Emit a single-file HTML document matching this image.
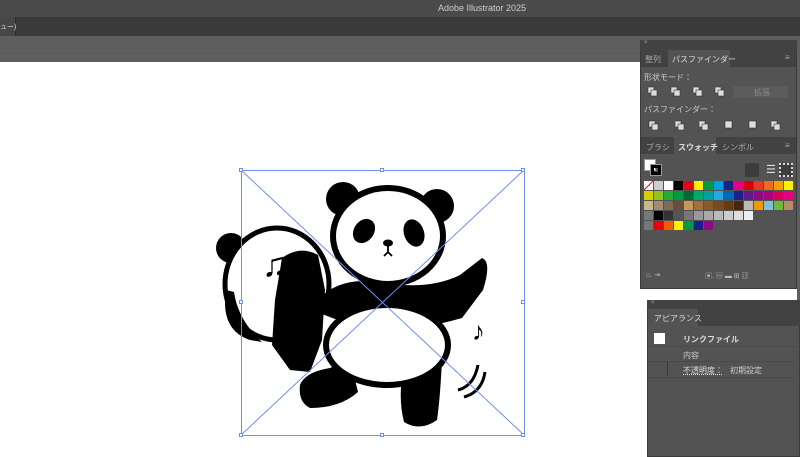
<!DOCTYPE html>
<html><head><meta charset="utf-8"><style>
*{margin:0;padding:0;box-sizing:border-box}
body{width:800px;height:457px;overflow:hidden;background:#fff;font-family:"Liberation Sans","Noto Sans CJK JP",sans-serif;position:relative}
.a{position:absolute}
.t{font-size:8px;color:#ddd;white-space:nowrap}
</style></head><body>
<div class="a" style="left:0;top:0;width:800px;height:17px;background:#4b4b4b"></div>
<div class="a t" style="left:438px;top:3px;font-size:9px;color:#ccc">Adobe Illustrator 2025</div>
<div class="a" style="left:0;top:17px;width:800px;height:19px;background:#3a3a3a"></div>
<div class="a" style="left:0;top:17px;width:16px;height:19px;background:#474747;border-right:1px solid #2a2a2a"></div>
<div class="a t" style="left:0;top:22px;font-size:7px">ュー)</div>
<div class="a" style="left:0;top:36px;width:800px;height:26px;background:#5e5e5e"></div>
<div class="a" style="left:0;top:53px;width:800px;height:1px;background:#c0302a"></div>

<svg class="a" style="left:0;top:62px" width="800" height="395">
<g transform="translate(0,-62)">
<!-- back panda -->
<circle cx="231" cy="248" r="15" fill="#000"/>
<ellipse cx="277" cy="284" rx="52" ry="56" fill="#fff" stroke="#000" stroke-width="5"/>
<path d="M226 290 Q220 330 250 340 L262 342 Q238 320 234 292Z" fill="#000"/>
<path d="M282 258 Q300 245 318 255 L325 290 L322 340 L310 372 L290 370 L272 345 L275 300 Z" fill="#000"/>
<!-- note -->
<text x="262" y="276" font-size="34" fill="#000">♫</text>
<!-- main panda -->
<circle cx="343" cy="199" r="17" fill="#000"/>
<circle cx="437" cy="206" r="17" fill="#000"/>
<path d="M318 300 Q340 275 385 283 Q430 290 460 275 L482 258 Q492 262 483 290 L462 318 Q420 330 385 330 Q345 325 318 312 Z" fill="#000"/>
<path d="M300 385 Q305 372 330 368 L350 360 L358 392 Q340 408 310 408 Q298 402 300 385Z" fill="#000"/>
<path d="M403 372 L442 360 Q440 400 437 420 Q420 432 404 422 Q398 398 403 372Z" fill="#000"/>
<ellipse cx="387" cy="345" rx="61" ry="40" fill="#fff" stroke="#000" stroke-width="6"/>
<ellipse cx="388" cy="236" rx="55" ry="48" fill="#fff" stroke="#000" stroke-width="6"/>
<ellipse cx="364" cy="231" rx="10" ry="13" transform="rotate(35 364 231)" fill="#000"/>
<ellipse cx="414" cy="233" rx="10" ry="14" transform="rotate(-20 414 233)" fill="#000"/>
<ellipse cx="388" cy="243" rx="5" ry="3.5" fill="#000"/>
<path d="M388 246 V253 M384 256 L388 252 L392 256" stroke="#000" stroke-width="1.8" fill="none"/>
<text x="472" y="340" font-size="26" fill="#000">♪</text>
<path d="M458 390 Q474 386 478 365 M464 397 Q482 392 485 372" stroke="#000" stroke-width="3" fill="none"/>
<!-- selection -->
<g stroke="#6f8ff0" stroke-width="1" fill="none">
<rect x="241.5" y="170.5" width="283" height="265"/>
<path d="M241 170 L524 435 M524 170 L241 435"/>
</g>
<g fill="#fff" stroke="#6f8ff0">
<rect x="239.5" y="168.5" width="3" height="3"/><rect x="380.5" y="168.5" width="3" height="3"/><rect x="521.5" y="168.5" width="3" height="3"/>
<rect x="239.5" y="300.5" width="3" height="3"/><rect x="521.5" y="300.5" width="3" height="3"/>
<rect x="239.5" y="433.5" width="3" height="3"/><rect x="380.5" y="433.5" width="3" height="3"/><rect x="521.5" y="433.5" width="3" height="3"/>
</g>
</g></svg>

<div class="a" style="left:797px;top:62px;width:3px;height:395px;background:#5e5e5e"></div>

<!-- panel 1 -->
<div class="a" style="left:640px;top:40px;width:157px;height:249px;background:#535353;border:1px solid #3a3a3a"></div>
<div class="a" style="left:640px;top:40px;width:157px;height:9px;background:#424242"></div>
<div class="a t" style="left:644px;top:40px;font-size:6px;color:#aaa">×</div>
<div class="a" style="left:641px;top:49px;width:155px;height:18px;background:#424242"></div>
<div class="a" style="left:668px;top:50px;width:62px;height:17px;background:#535353"></div>
<div class="a t" style="left:645px;top:54px;color:#aaa">整列</div>
<div class="a t" style="left:672px;top:54px">パスファインダー</div>
<div class="a t" style="left:785px;top:53px;color:#aaa">≡</div>
<div class="a t" style="left:644px;top:72px;color:#ccc">形状モード：</div>
<div class="a" style="left:733px;top:86px;width:55px;height:12px;background:#5c5c5c"></div>
<div class="a t" style="left:754px;top:87px;color:#888">拡張</div>
<div class="a t" style="left:644px;top:104px;color:#ccc">パスファインダー：</div>
<svg class="a" style="left:640px;top:40px" width="157" height="250">
<g fill="#ddd" stroke="#333" stroke-width=".6">
<rect x="8" y="47" width="6" height="6"/><rect x="11" y="50" width="6" height="6"/>
<rect x="31" y="47" width="6" height="6"/><rect x="34" y="50" width="6" height="6"/>
<rect x="53" y="47" width="6" height="6"/><rect x="56" y="50" width="6" height="6"/>
<rect x="75" y="47" width="6" height="6"/><rect x="78" y="50" width="6" height="6"/>
<rect x="9" y="81" width="6" height="6"/><rect x="12" y="84" width="6" height="6"/>
<rect x="35" y="81" width="6" height="6"/><rect x="38" y="84" width="6" height="6"/>
<rect x="59" y="81" width="6" height="6"/><rect x="62" y="84" width="6" height="6"/>
<rect x="85" y="81" width="7" height="7"/>
<rect x="109" y="81" width="7" height="7"/>
<rect x="131" y="81" width="6" height="6"/><rect x="134" y="84" width="6" height="6"/>
</g></svg>
<div class="a" style="left:641px;top:137px;width:155px;height:17px;background:#424242"></div>
<div class="a" style="left:674px;top:137px;width:42px;height:17px;background:#535353"></div>
<div class="a t" style="left:646px;top:142px;color:#aaa">ブラシ</div>
<div class="a t" style="left:678px;top:142px;font-weight:bold">スウォッチ</div>
<div class="a t" style="left:722px;top:142px;color:#aaa">シンボル</div>
<div class="a t" style="left:785px;top:141px;color:#aaa">≡</div>
<div class="a" style="left:644px;top:159px;width:12px;height:12px;background:#fff;border:1px solid #999"></div>
<div class="a" style="left:651px;top:165px;width:10px;height:10px;border:3px solid #000;outline:1px solid #999"></div>
<div class="a" style="left:745px;top:163px;width:14px;height:14px;background:#3c3c3c"></div>
<div class="a" style="left:779px;top:163px;width:14px;height:14px;background:#3c3c3c;border:2px dotted #ddd"></div>
<div class="a t" style="left:766px;top:163px;font-size:11px">☰</div>
<svg class="a" style="left:644px;top:181px" width="125" height="50">
<rect x="0" y="0" width="9" height="9" fill="#fff"/><path d="M0 9 L9 0" stroke="red"/>
<rect x="10" y="0" width="9" height="9" fill="#ccc"/><rect x="20" y="0" width="9" height="9" fill="#fff"/>
<rect x="30" y="0" width="9" height="9" fill="#000"/><rect x="40" y="0" width="9" height="9" fill="#e60012"/><rect x="50" y="0" width="9" height="9" fill="#fff100"/><rect x="60" y="0" width="9" height="9" fill="#009944"/><rect x="70" y="0" width="9" height="9" fill="#00a0e9"/><rect x="80" y="0" width="9" height="9" fill="#1d2088"/><rect x="90" y="0" width="9" height="9" fill="#e4007f"/><rect x="100" y="0" width="9" height="9" fill="#d7000f"/><rect x="110" y="0" width="9" height="9" fill="#e83828"/>
<rect x="0" y="10" width="9" height="9" fill="#d7d000"/><rect x="10" y="10" width="9" height="9" fill="#8fc31f"/><rect x="20" y="10" width="9" height="9" fill="#22ac38"/><rect x="30" y="10" width="9" height="9" fill="#009944"/><rect x="40" y="10" width="9" height="9" fill="#006934"/><rect x="50" y="10" width="9" height="9" fill="#00a870"/><rect x="60" y="10" width="9" height="9" fill="#00a0a0"/><rect x="70" y="10" width="9" height="9" fill="#27a8e0"/><rect x="80" y="10" width="9" height="9" fill="#0068b7"/><rect x="90" y="10" width="9" height="9" fill="#1d2088"/><rect x="100" y="10" width="9" height="9" fill="#601986"/><rect x="110" y="10" width="9" height="9" fill="#920783"/>
<rect x="0" y="20" width="9" height="9" fill="#c8b88a"/><rect x="10" y="20" width="9" height="9" fill="#a48b78"/><rect x="20" y="20" width="9" height="9" fill="#7d6b56"/><rect x="30" y="20" width="9" height="9" fill="#6a4d3a"/><rect x="40" y="20" width="9" height="9" fill="#c49a5a"/><rect x="50" y="20" width="9" height="9" fill="#a0713a"/><rect x="60" y="20" width="9" height="9" fill="#8a5a2a"/><rect x="70" y="20" width="9" height="9" fill="#7a4a1e"/><rect x="80" y="20" width="9" height="9" fill="#6a3a10"/><rect x="90" y="20" width="9" height="9" fill="#4a2810"/><rect x="100" y="20" width="9" height="9" fill="#bbb"/><rect x="110" y="20" width="9" height="9" fill="#f39800"/>
<rect x="0" y="30" width="9" height="9" fill="#777"/><rect x="10" y="30" width="9" height="9" fill="#000"/><rect x="20" y="30" width="9" height="9" fill="#333"/><rect x="30" y="30" width="9" height="9" fill="#555"/><rect x="40" y="30" width="9" height="9" fill="#777"/><rect x="50" y="30" width="9" height="9" fill="#999"/><rect x="60" y="30" width="9" height="9" fill="#aaa"/><rect x="70" y="30" width="9" height="9" fill="#bbb"/><rect x="80" y="30" width="9" height="9" fill="#ccc"/><rect x="90" y="30" width="9" height="9" fill="#ddd"/><rect x="100" y="30" width="9" height="9" fill="#eee"/>
<rect x="0" y="40" width="9" height="9" fill="#777"/><rect x="10" y="40" width="9" height="9" fill="#e60012"/><rect x="20" y="40" width="9" height="9" fill="#eb6100"/><rect x="30" y="40" width="9" height="9" fill="#fff100"/><rect x="40" y="40" width="9" height="9" fill="#009944"/><rect x="50" y="40" width="9" height="9" fill="#1d2088"/><rect x="60" y="40" width="9" height="9" fill="#920783"/>
</svg>
<svg class="a" style="left:764px;top:181px" width="30" height="30">
<rect x="0" y="0" width="9" height="9" fill="#ec6d1f"/><rect x="10" y="0" width="9" height="9" fill="#f5a200"/><rect x="20" y="0" width="9" height="9" fill="#fff100"/>
<rect x="0" y="10" width="9" height="9" fill="#a5087e"/><rect x="10" y="10" width="9" height="9" fill="#d7005a"/><rect x="20" y="10" width="9" height="9" fill="#e4007f"/>
<rect x="0" y="20" width="9" height="9" fill="#7fbfe0"/><rect x="10" y="20" width="9" height="9" fill="#6fb83a"/><rect x="20" y="20" width="9" height="9" fill="#b88c6a"/>
</svg>
<div class="a t" style="left:646px;top:271px;color:#bbb;font-size:7px">⌂. ⇥</div>
<div class="a t" style="left:705px;top:271px;color:#bbb;font-size:7px">▣. ▤ ▬ ⊞ ▥</div>

<!-- panel 2 -->
<div class="a" style="left:647px;top:300px;width:153px;height:157px;background:#535353;border:1px solid #3a3a3a"></div>
<div class="a" style="left:647px;top:300px;width:153px;height:9px;background:#424242"></div>
<div class="a t" style="left:651px;top:300px;font-size:6px;color:#aaa">×</div>
<div class="a" style="left:648px;top:309px;width:152px;height:17px;background:#424242"></div>
<div class="a" style="left:648px;top:309px;width:50px;height:17px;background:#535353"></div>
<div class="a t" style="left:654px;top:313px">アピアランス</div>
<div class="a" style="left:654px;top:333px;width:11px;height:11px;background:#fff"></div>
<div class="a t" style="left:683px;top:334px;font-weight:bold">リンクファイル</div>
<div class="a" style="left:648px;top:346px;width:148px;height:1px;background:#4a4a4a"></div>
<div class="a t" style="left:683px;top:350px;color:#ccc">内容</div>
<div class="a" style="left:648px;top:361px;width:148px;height:1px;background:#4a4a4a"></div>
<div class="a" style="left:667px;top:362px;width:1px;height:14px;background:#3a3a3a"></div>
<div class="a t" style="left:683px;top:365px;text-decoration:underline dotted">不透明度：</div>
<div class="a t" style="left:730px;top:365px;color:#ccc">初期設定</div>
<div class="a" style="left:648px;top:377px;width:148px;height:1px;background:#4a4a4a"></div>
</body></html>
